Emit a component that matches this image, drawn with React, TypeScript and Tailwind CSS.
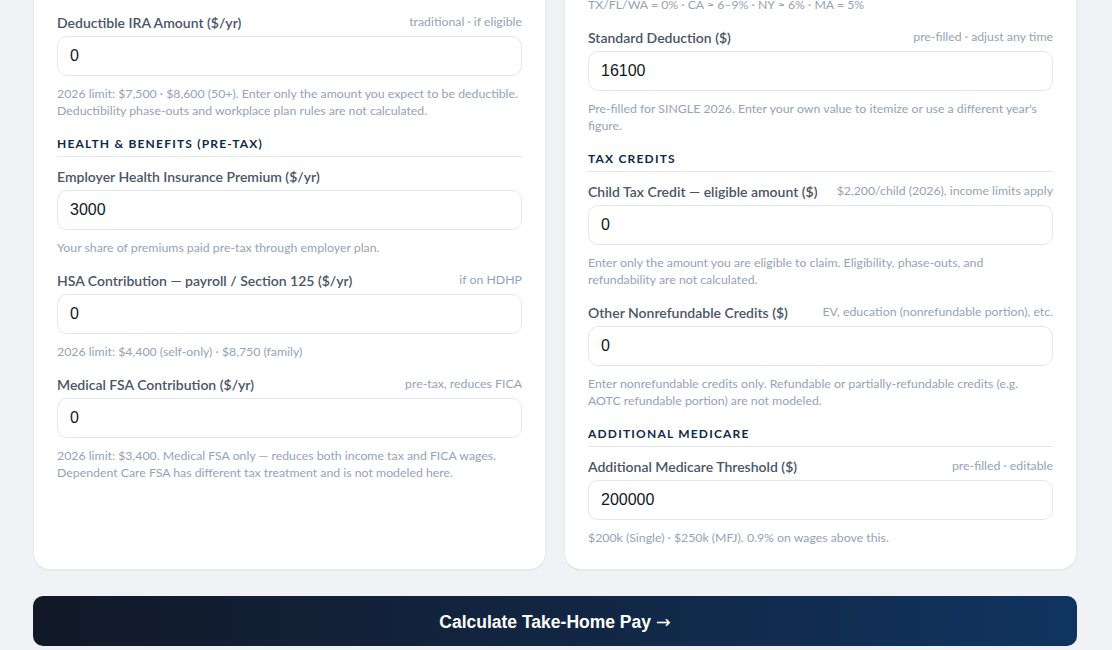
import type { ReactNode } from "react";

const font = { fontFamily: "Lato, 'Noto Sans', sans-serif" };

function Heading({ children, tight }: { children: ReactNode; tight?: boolean }) {
  return (
    <div
      className={`mt-4 border-b border-[#e2e8f0] pb-[3px] text-[12px] leading-[18px] font-bold tracking-[0.1em] text-[#0f2a4a] uppercase first:mt-0 ${
        tight ? "mb-[7px]" : "mb-[9px]"
      }`}
    >
      {children}
    </div>
  );
}

function Field({
  label,
  hint,
  value,
  help,
}: {
  label: string;
  hint?: string;
  value: string;
  help: ReactNode;
}) {
  return (
    <div className="mb-[14px] last:mb-0">
      <div className="flex h-5 items-center justify-between gap-3">
        <span className="text-[14px] font-semibold text-[#4a5568]">{label}</span>
        {hint && <span className="text-[12.3px] text-[#94a3b8]">{hint}</span>}
      </div>
      <input
        readOnly
        value={value}
        className="mt-1 block h-10 w-full rounded-[10px] border border-[#e2e8f0] bg-white px-3 text-[16px] text-[#111827] outline-none"
        style={{ fontFamily: "'Liberation Sans', Arial, sans-serif" }}
      />
      <p className="mt-[9px] text-[12.3px] leading-[17px] text-[#94a3b8]">{help}</p>
    </div>
  );
}

export default function App() {
  return (
    <div className="min-h-screen overflow-hidden bg-[#f0f2f5] pr-[35px] pl-[33px]" style={font}>
      <div className="mx-px -mt-[147px] grid grid-cols-2 gap-5">
        <div className="rounded-2xl bg-white px-[23px] pt-6 pb-[23px] shadow-[0_1px_3px_rgba(15,23,42,0.08)]">
          <Heading>Retirement (Pre-Tax)</Heading>
          <Field
            label="Traditional 401(k) / 403(b) ($/yr)"
            hint="pre-tax"
            value="0"
            help="2026 limit: $24,500 · $32,500 (50+)."
          />
          <Field
            label="Deductible IRA Amount ($/yr)"
            hint="traditional · if eligible"
            value="0"
            help="2026 limit: $7,500 · $8,600 (50+). Enter only the amount you expect to be deductible. Deductibility phase-outs and workplace plan rules are not calculated."
          />
          <Heading>Health &amp; Benefits (Pre-Tax)</Heading>
          <Field
            label="Employer Health Insurance Premium ($/yr)"
            value="3000"
            help="Your share of premiums paid pre-tax through employer plan."
          />
          <Field
            label="HSA Contribution — payroll / Section 125 ($/yr)"
            hint="if on HDHP"
            value="0"
            help="2026 limit: $4,400 (self-only) · $8,750 (family)"
          />
          <Field
            label="Medical FSA Contribution ($/yr)"
            hint="pre-tax, reduces FICA"
            value="0"
            help="2026 limit: $3,400. Medical FSA only — reduces both income tax and FICA wages. Dependent Care FSA has different tax treatment and is not modeled here."
          />
        </div>

        <div className="rounded-2xl bg-white px-[23px] pt-6 pb-[23px] shadow-[0_1px_3px_rgba(15,23,42,0.08)]">
          <Heading tight>State &amp; Deductions</Heading>
          <Field
            label="State Income Tax Rate (%)"
            hint="flat estimate"
            value="5"
            help={
              <>
                Flat effective rate applied to taxable income. Typical rates:
                <br />
                TX/FL/WA = 0% · CA ≈ 6–9% · NY ≈ 6% · MA = 5%
              </>
            }
          />
          <Field
            label="Standard Deduction ($)"
            hint="pre-filled · adjust any time"
            value="16100"
            help="Pre-filled for SINGLE 2026. Enter your own value to itemize or use a different year's figure."
          />
          <Heading>Tax Credits</Heading>
          <Field
            label="Child Tax Credit — eligible amount ($)"
            hint="$2,200/child (2026), income limits apply"
            value="0"
            help="Enter only the amount you are eligible to claim. Eligibility, phase-outs, and refundability are not calculated."
          />
          <Field
            label="Other Nonrefundable Credits ($)"
            hint="EV, education (nonrefundable portion), etc."
            value="0"
            help="Enter nonrefundable credits only. Refundable or partially-refundable credits (e.g. AOTC refundable portion) are not modeled."
          />
          <Heading>Additional Medicare</Heading>
          <Field
            label="Additional Medicare Threshold ($)"
            hint="pre-filled · editable"
            value="200000"
            help="$200k (Single) · $250k (MFJ). 0.9% on wages above this."
          />
        </div>
      </div>

      <button
        className="mt-[27px] flex h-[50px] w-full items-center justify-center rounded-[10px] bg-gradient-to-r from-[#111827] to-[#0f3460] pt-[2px] text-[17.5px] font-bold text-white"
        style={{ fontFamily: "'Liberation Sans', Arial, sans-serif" }}
      >
        Calculate Take-Home Pay{" "}
        <span className="ml-[5px] font-normal" style={{ fontFamily: "'DejaVu Sans', sans-serif" }}>
          →
        </span>
      </button>
    </div>
  );
}
